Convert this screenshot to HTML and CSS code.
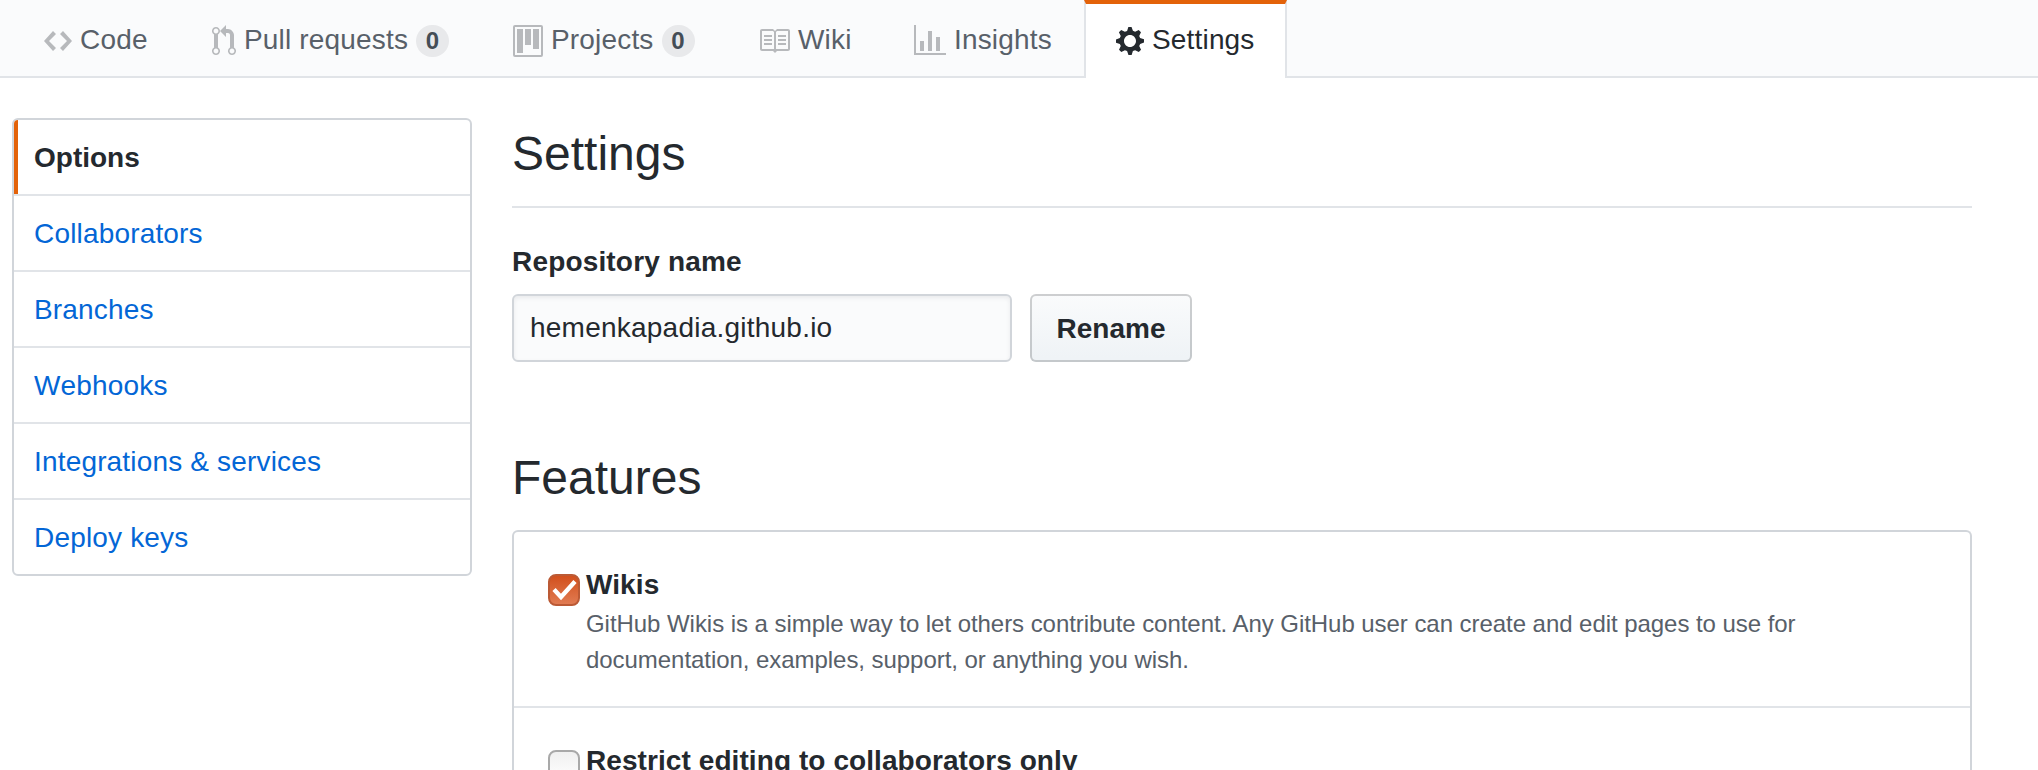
FILE: index.html
```html
<!DOCTYPE html>
<html lang="en">
<head>
<meta charset="utf-8">
<title>Settings</title>
<link rel="stylesheet" href="styles.css">
</head>
<body>
<div class="page">
<nav class="reponav">
  <a class="tab tab-code"><svg class="icon" width="28" height="32" viewBox="0 0 14 16"><path fill-rule="evenodd" d="M9.5 3L8 4.5 11.5 8 8 11.5 9.5 13 14 8 9.5 3zm-5 0L0 8l4.5 5L6 11.5 2.5 8 6 4.5 4.5 3z"/></svg><span class="tab-label">Code</span></a>
  <a class="tab tab-pulls"><svg class="icon" width="24" height="32" viewBox="0 0 12 16"><path fill-rule="evenodd" d="M11 11.28V5c-.03-.78-.34-1.47-.94-2.06C9.46 2.35 8.78 2.03 8 2H7V0L4 3l3 3V4h1c.27.02.48.11.69.31.21.2.3.42.31.69v6.28A1.993 1.993 0 0 0 10 15a1.993 1.993 0 0 0 1-3.72zm-1 2.92c-.66 0-1.2-.55-1.2-1.2 0-.65.55-1.2 1.2-1.2.65 0 1.2.55 1.2 1.2 0 .65-.55 1.2-1.2 1.2zM4 3c0-1.11-.89-2-2-2a1.993 1.993 0 0 0-1 3.72v6.56A1.993 1.993 0 0 0 2 15a1.993 1.993 0 0 0 1-3.72V4.72c.59-.34 1-.98 1-1.720zm-.8 10c0 .66-.55 1.2-1.2 1.2-.65 0-1.2-.55-1.2-1.2 0-.65.55-1.2 1.2-1.2.65 0 1.2.55 1.2 1.2zM2 4.2C1.340 4.2.8 3.65.8 3c0-.65.55-1.2 1.2-1.2.65 0 1.2.55 1.2 1.2 0 .65-.55 1.2-1.2 1.2z"/></svg><span class="tab-label">Pull requests</span><span class="counter">0</span></a>
  <a class="tab tab-projects"><svg class="icon" width="30" height="32" viewBox="0 0 15 16"><path fill-rule="evenodd" d="M10 12h3V2h-3v10zm-4-2h3V2H6v8zm-4 4h3V2H2v12zm-1 1h13V1H1v14zM14 0H1a1 1 0 0 0-1 1v14a1 1 0 0 0 1 1h13a1 1 0 0 0 1-1V1a1 1 0 0 0-1-1z"/></svg><span class="tab-label">Projects</span><span class="counter">0</span></a>
  <a class="tab tab-wiki"><svg class="icon" width="32" height="32" viewBox="0 0 16 16"><path fill-rule="evenodd" d="M3 5h4v1H3V5zm0 3h4V7H3v1zm0 2h4V9H3v1zm11-5h-4v1h4V5zm0 2h-4v1h4V7zm0 2h-4v1h4V9zm2-6v9c0 .55-.45 1-1 1H9.5l-1 1-1-1H2c-.55 0-1-.45-1-1V3c0-.55.45-1 1-1h5.5l1 1 1-1H15c.55 0 1 .45 1 1zm-8 .5L7.5 3H2v9h6V3.500zm7-.5H9.500l-.5.5V12h6V3z"/></svg><span class="tab-label">Wiki</span></a>
  <a class="tab tab-insights"><svg class="icon" width="32" height="32" viewBox="0 0 16 16"><path fill-rule="evenodd" d="M16 14v1H0V0h1v14h15zM5 13H3V8h2v5zm4 0H7V3h2v10zm4 0h-2V6h2v7z"/></svg><span class="tab-label">Insights</span></a>
  <a class="tab tab-settings selected"><svg class="icon" width="28" height="32" viewBox="0 0 14 16"><path fill-rule="evenodd" d="M14 8.770v-1.600l-1.940-.640-.450-1.090.880-1.840-1.130-1.130-1.810.910-1.090-.450-.690-1.920h-1.600l-.630 1.940-1.110.450-1.840-.880-1.130 1.130.910 1.810-.450 1.090L0 7.230v1.590l1.940.640.450 1.090-.880 1.840 1.130 1.130 1.810-.910 1.090.450.690 1.920h1.590l.630-1.940 1.110-.450 1.840.880 1.130-1.130-.920-1.810.470-1.090L14 8.750v.020zM7 11c-1.660 0-3-1.340-3-3s1.340-3 3-3 3 1.340 3 3-1.340 3-3 3z"/></svg><span class="tab-label">Settings</span></a>
</nav>
<div class="container">
  <aside class="menu">
    <a class="menu-item current">Options</a>
    <a class="menu-item">Collaborators</a>
    <a class="menu-item">Branches</a>
    <a class="menu-item">Webhooks</a>
    <a class="menu-item">Integrations &amp; services</a>
    <a class="menu-item">Deploy keys</a>
  </aside>
  <main class="content">
    <h2 class="subhead">Settings</h2>
    <label class="field-label" for="repo-name">Repository name</label>
    <div class="rename-row">
      <input class="text-input" id="repo-name" type="text" value="hemenkapadia.github.io">
      <button class="btn" type="button">Rename</button>
    </div>
    <h2 class="features-title">Features</h2>
    <div class="box">
      <div class="box-row">
        <span class="check checked"><svg width="32" height="32" viewBox="0 0 32 32"><path d="M6 15.500L13 23L27 7.500" fill="none" stroke="#fff" stroke-width="4.400"/></svg></span>
        <div class="feature">
          <div class="feature-name">Wikis</div>
          <p class="note">GitHub Wikis is a simple way to let others contribute content. Any GitHub user can create and edit pages to use for<br>documentation, examples, support, or anything you wish.</p>
        </div>
      </div>
      <div class="box-row">
        <span class="check"></span>
        <div class="feature">
          <div class="feature-name">Restrict editing to collaborators only</div>
        </div>
      </div>
    </div>
  </main>
</div>
</div>
</body>
</html>
```
FILE: styles.css
```css
* {
  box-sizing: border-box;
}

body {
  margin: 0;
  background: #fff;
  color: #24292e;
  font: 28px/43px "Liberation Sans", Arial, sans-serif;
  letter-spacing: .17px;
}

.page {
  display: flex;
  flex-direction: column;
  height: 770px;
  overflow: hidden;
}

.reponav {
  display: flex;
  flex: none;
  height: 78px;
  padding-left: 12px;
  background: #fafbfc;
  border-bottom: 2px solid #e1e4e8;
}

.tab {
  display: flex;
  align-items: flex-start;
  height: 78px;
  padding: 25px 30px 0;
  border: 0 solid transparent;
  border-width: 0 2px;
  color: #586069;
  white-space: nowrap;
}

.icon {
  flex: none;
  margin-right: 8px;
  fill: #b7b9bc;
}

.tab-label {
  line-height: 32px;
  margin-top: -1px;
}

.counter {
  flex: none;
  width: 33px;
  height: 32px;
  margin-left: 8px;
  border-radius: 32px;
  background: rgba(27, 31, 35, .08);
  color: #444d56;
  font-size: 24px;
  font-weight: bold;
  line-height: 32px;
  text-align: center;
}

.tab-code { width: 168px; }
.tab-pulls { width: 301px; }
.tab-projects { width: 245px; }
.tab-wiki { width: 156px; }
.tab-insights { width: 202px; }
.tab-settings { width: 203px; }

.tab.selected {
  padding-top: 21px;
  border-color: #e1e4e8;
  border-top: 4px solid #e36209;
  background: #fff;
  color: #24292e;
}

.selected .icon {
  fill: #24292e;
}

.container {
  display: flex;
  flex: 1;
  align-items: flex-start;
  gap: 40px;
  min-height: 0;
  padding: 40px 66px 0 12px;
}

.menu {
  flex: none;
  width: 460px;
  height: 458px;
  border: 2px solid #d1d5da;
  border-radius: 6px;
  overflow: hidden;
  font-kerning: none;
}

.menu-item {
  display: block;
  height: 76px;
  padding: 16px 20px;
  border-bottom: 2px solid #e1e4e8;
  color: #0366d6;
}

.menu-item:last-child {
  border-bottom: 0;
}

.menu-item.current {
  color: #24292e;
  font-weight: bold;
  letter-spacing: 0;
  background: linear-gradient(#e36209, #e36209) left / 4px 100% no-repeat;
}

.content {
  flex: 1;
}

h2 {
  margin: 0;
  font-size: 48px;
  font-weight: normal;
  letter-spacing: 0;
  line-height: 71px;
}

.subhead {
  height: 90px;
  border-bottom: 2px solid #e1e4e8;
}

.field-label {
  display: block;
  margin-top: 32px;
  font-weight: bold;
}

.rename-row {
  display: flex;
  gap: 18px;
  margin-top: 11px;
}

.text-input {
  width: 500px;
  height: 68px;
  padding: 0 16px;
  border: 2px solid #d1d5da;
  border-radius: 6px;
  background: #fafbfc;
  box-shadow: inset 0 2px 4px rgba(27, 31, 35, .075);
  color: #24292e;
  font: inherit;
  letter-spacing: .23px;
}

.btn {
  width: 162px;
  height: 68px;
  padding: 0;
  border: 2px solid rgba(27, 31, 35, .2);
  border-radius: 6px;
  background: linear-gradient(-180deg, #fafbfc, #eff3f6 90%) -2px -2px / 110% 110%;
  color: #24292e;
  font: inherit;
  font-weight: bold;
}

.features-title {
  margin-top: 80px;
}

.box {
  height: 240px;
  margin-top: 17px;
  border: 2px solid #d1d5da;
  border-bottom: 0;
  border-radius: 6px 6px 0 0;
  overflow: hidden;
}

.box-row {
  display: flex;
  align-items: flex-start;
  height: 176px;
  padding: 31px 34px 0;
  border-bottom: 2px solid #e1e4e8;
}

.box-row:last-child {
  height: 62px;
  border-bottom: 0;
}

.check {
  flex: none;
  width: 32px;
  height: 32px;
  margin: 11px 6px 0 0;
  border: 2px solid #a9a9a9;
  border-radius: 8px;
  background: linear-gradient(#f0f0f0, #fff);
}

.checked {
  border-color: #bb5a35;
  background: linear-gradient(#d2501d, #e07b52);
}

.check svg {
  display: block;
  margin: -2px;
}

.feature-name {
  font-weight: bold;
  letter-spacing: .08px;
}

.note {
  margin: 0;
  color: #586069;
  font-size: 24px;
  letter-spacing: -.05px;
  line-height: 36px;
  white-space: nowrap;
}
```
